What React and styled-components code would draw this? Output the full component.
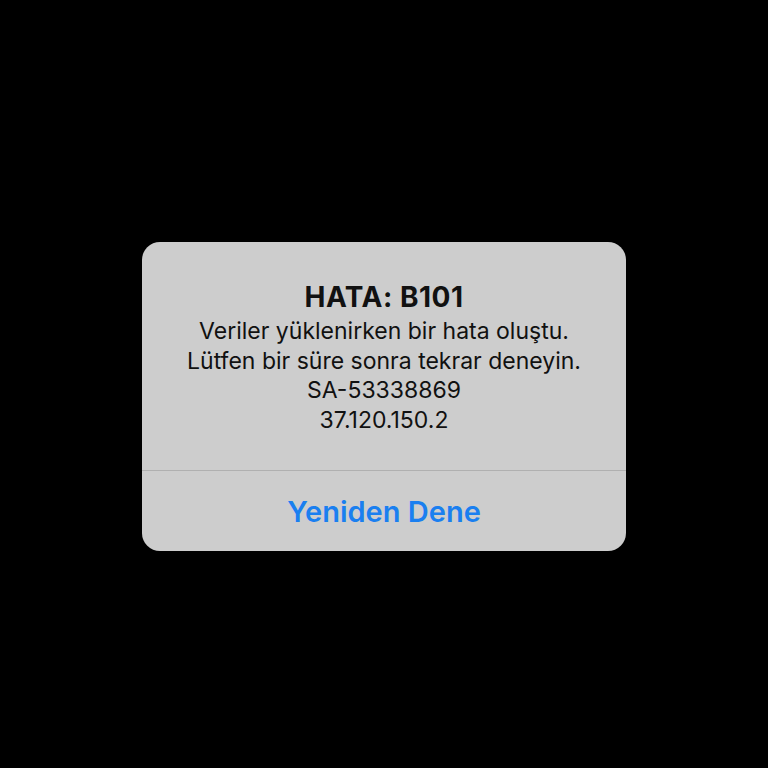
import React from 'react';
import styled, {createGlobalStyle} from 'styled-components';

const GlobalStyle = createGlobalStyle`
    html, body {
        margin: 0;
        padding: 0;
        background: #000000;
        font-family: Inter, "Noto Sans", "Liberation Sans", sans-serif;
    }
`;

const Screen = styled.div`
    width: 768px;
    height: 768px;
    display: flex;
    justify-content: center;
    align-items: flex-start;
    padding-top: 242px;
    box-sizing: border-box;
`;

const Alert = styled.div`
    width: 484px;
    height: 309px;
    background: #cdcdcd;
    border-radius: 18px;
    display: flex;
    flex-direction: column;
    overflow: hidden;
`;

const Content = styled.div`
    height: 229px;
    box-sizing: border-box;
    padding-top: 38px;
    display: flex;
    flex-direction: column;
    align-items: center;
    color: #111111;
    border-bottom: 1px solid #b0b0b0;
`;

const Title = styled.h2`
    margin: 0 0 3px;
    font-size: 28px;
    line-height: 34px;
    font-weight: 700;
    letter-spacing: 0.5px;
`;

const Line = styled.p`
    margin: 0;
    font-size: 23px;
    line-height: 29.5px;
    font-weight: 400;
    letter-spacing: 0;
    text-align: center;
`;

const Action = styled.button`
    flex: 1;
    border: none;
    background: transparent;
    font-family: inherit;
    font-size: 29px;
    font-weight: 600;
    color: #1a7ff0;
    cursor: pointer;
`;

const App = () => {
    return(
        <>
            <GlobalStyle/>
            <Screen>
                <Alert>
                    <Content>
                        <Title>HATA: B101</Title>
                        <Line>Veriler yüklenirken bir hata oluştu.</Line>
                        <Line>Lütfen bir süre sonra tekrar deneyin.</Line>
                        <Line>SA-53338869</Line>
                        <Line>37.120.150.2</Line>
                    </Content>
                    <Action>Yeniden Dene</Action>
                </Alert>
            </Screen>
        </>
    );
};

export default App;
